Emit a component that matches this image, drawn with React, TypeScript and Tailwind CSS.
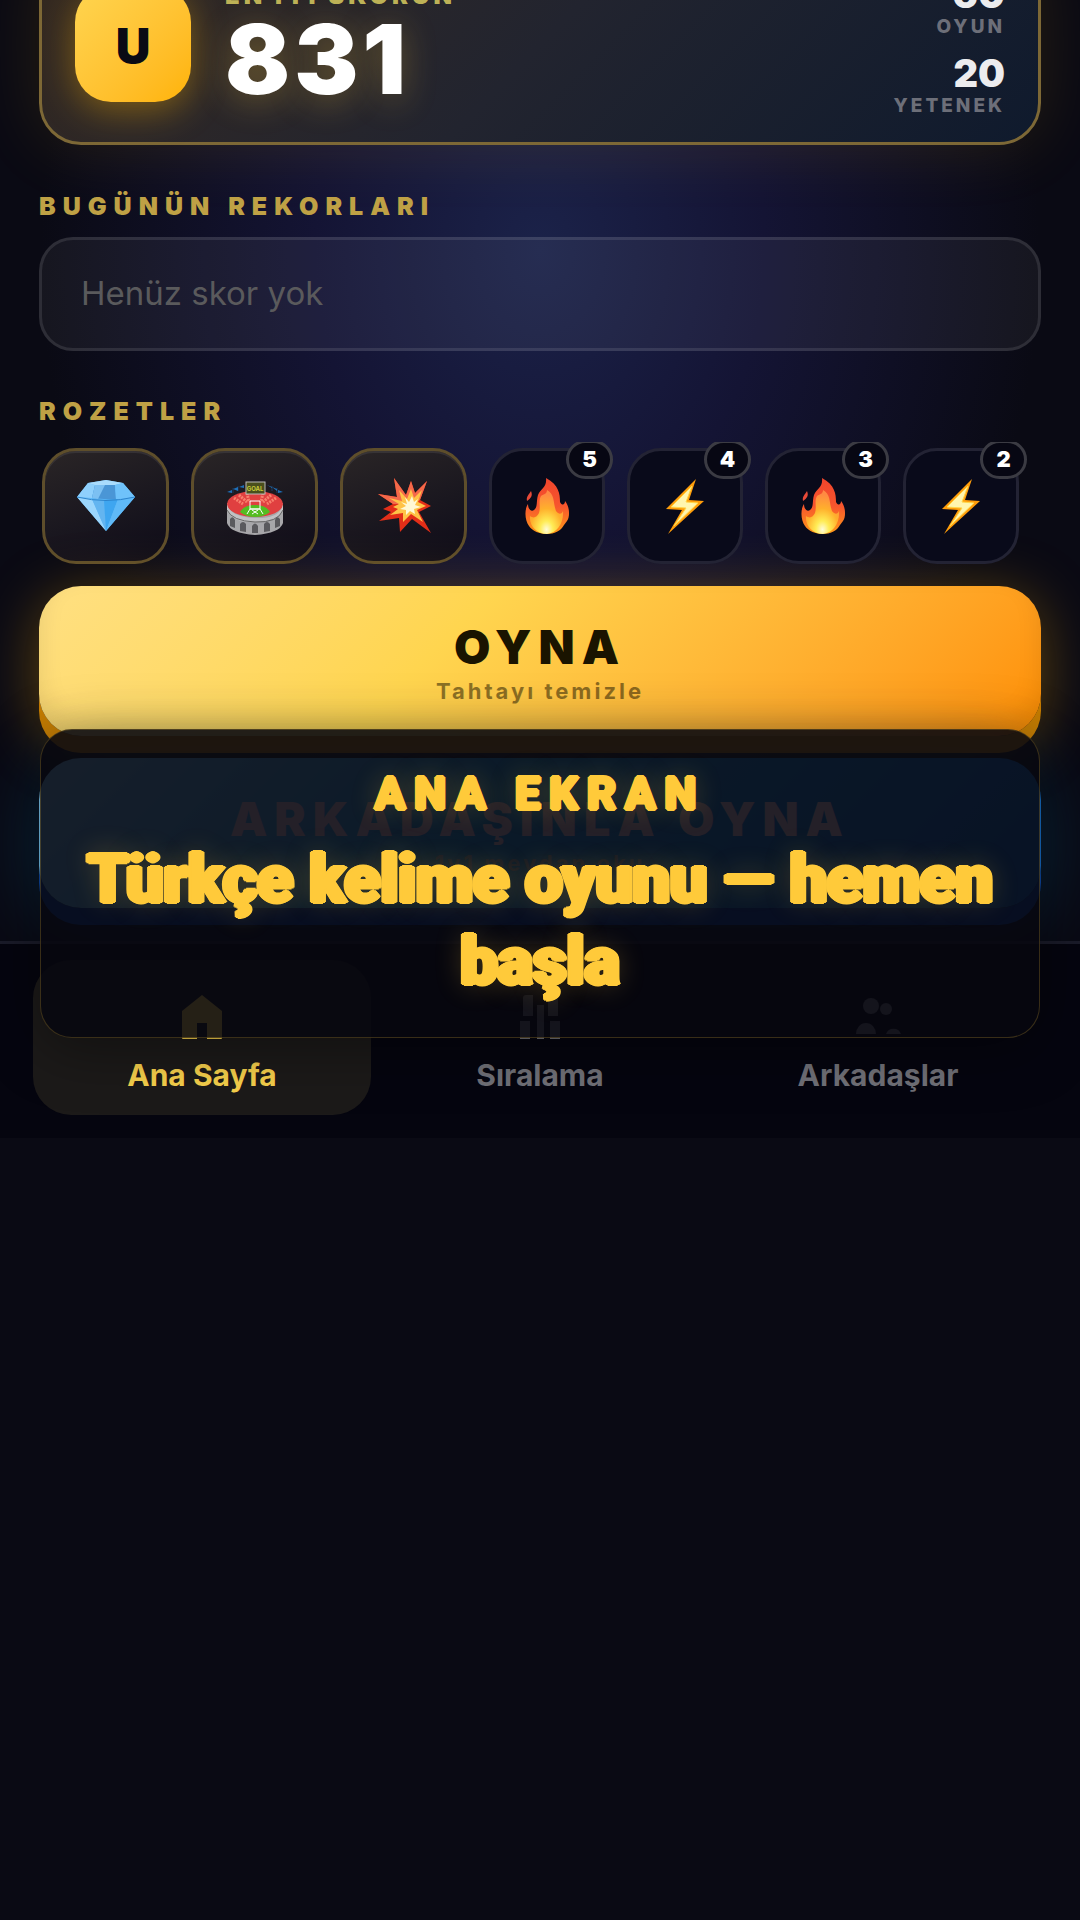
import React from 'react';

const Diamond = () => <svg viewBox="0 0 60 60" className="w-[60px] h-[60px]">
    <polygon points="1,21 12,7 30,4 47,7 59,21 30,55" fill="#5cb8f8" />
    <polygon points="1,21 12,7 19,9 16,22" fill="#8fd0fc" />
    <polygon points="12,7 30,4 47,7 39,9 19,9" fill="#a9dcfd" />
    <polygon points="19,9 39,9 40,24 16,22" fill="#4a96d6" />
    <polygon points="19,9 29,9 22,23 16,22" fill="#7cc0f2" />
    <polygon points="39,9 47,7 59,21 40,24" fill="#6fc2fa" />
    <polygon points="1,21 16,23 30,55" fill="#9bd6fc" />
    <polygon points="16,23 28,24 30,55" fill="#63b5f0" />
    <polygon points="28,24 42,23 30,55" fill="#3ea6f0" />
    <polygon points="42,23 59,21 30,55" fill="#5fbaf8" />
    <path d="M1 21Q30 28 59 21" fill="none" stroke="#2d84cc" strokeWidth="1" />
  </svg>;

const Stadium = () => <svg viewBox="0 0 60 60" className="w-[60px] h-[60px]">
    <path d="M8 17V12M13 15V10M47 15V10M52 17V12" stroke="#1d2a3f" strokeWidth="2" />
    <path d="M2 16l5-2v3zM8 13l5-2v4zM14 11l5-2v3zM42 9l5 2v1zM47 11l5 2v2zM53 14l5 2-5 1z" fill="#1e6fb8" />
    <path d="M2 27v20Q5 57 30 59Q55 57 58 47V27z" fill="#a7a7aa" />
    <ellipse cx="30" cy="28" rx="28" ry="13" fill="#e04040" />
    <path d="M9 22l9 6M14 19l8 7M22 17l2 9M38 17l-2 9M46 19l-8 7M51 22l-9 6" fill="none" stroke="#f8806c" strokeWidth="3" strokeDasharray="2 1" />
    <rect x="21" y="6" width="19" height="12" fill="#4b4f1c" stroke="#b9b9b9" strokeWidth="1" />
    <text x="30" y="15" textAnchor="middle" fontSize="6" fontWeight="700" fill="#c9cc3a" fontFamily="Inter, sans-serif">GOAL</text>
    <path d="M15 36Q19 29 30 29T45 36Q39 41 30 41T15 36z" fill="#53bd22" />
    <path d="M25 25h10v8H25zM22 38l3-5h10l3 5M27 34l6 4M33 34l-6 4" fill="none" stroke="#fff" strokeWidth="1" />
    <path d="M2 29Q6 41 30 42T58 29v5Q53 45 30 46T2 34z" fill="#c1c1c3" />
    <path d="M2 34Q7 45 30 46T58 34" fill="none" stroke="#666" strokeWidth="1" />
    <path d="M5 50v-7q3-4 5 1v8zM15 55v-7q3-4 6 0v8zM27 57v-7q3-5 6 0v7zM39 56v-8q3-4 6 0v7zM50 52v-8q2-5 5-1v7z" fill="#5a5a5e" />
  </svg>;

const Boom = () => <svg viewBox="0 0 60 60" className="w-[60px] h-[60px]">
    <polygon points="20,2 32,19 37,5 41,17 53,5 46,24 57,30 45,36 57,57 38,43 26,56 25,42 5,45 17,36 9,33 19,28 4,18 23,21" fill="#e32e18" />
    <polygon points="20,2 32,19 37,5 41,17 53,5 46,24 36,28 19,28 4,18 23,21" fill="#f4694a" />
    <polygon points="25,14 33,23 37,13 40,22 48,14 44,26 52,30 43,34 49,46 37,38 29,46 29,37 16,39 24,33 19,31 25,28 15,22 28,25" fill="#ffc347" />
    <polygon points="31,21 35,26 38,20 40,26 44,23 41,29 47,31 40,33 41,38 36,35 32,39 32,34 26,33 32,30 27,26 33,28" fill="#fff9d5" />
  </svg>;

const Fire = () => <svg viewBox="0 0 60 60" className="w-[60px] h-[60px]">
    <defs>
      <linearGradient id="flame" x1="0" y1="0" x2="0" y2="1">
        <stop offset="0" stopColor="#f0452c" />
        <stop offset="0.5" stopColor="#f7552d" />
        <stop offset="1" stopColor="#ff9a18" />
      </linearGradient>
      <radialGradient id="core" cx="0.5" cy="0.9" r="0.8">
        <stop offset="0" stopColor="#fffbd8" />
        <stop offset="0.25" stopColor="#ffec55" />
        <stop offset="0.6" stopColor="#ffb02c" />
        <stop offset="1" stopColor="#ff8a42" />
      </radialGradient>
    </defs>
    <path d="M29 2C42 9 43 18 43 26C45 30 48 29 48 25C53 31 53 41 50 45L47 49C44 55 37 58 30 58S15 55 12 50C8 45 7 34 11 28C11 33 14 36 17 34C21 31 19 26 21 19C24 12 30 12 29 2z" fill="url(#flame)" />
    <path d="M30 14C38 18 36 27 39 35C42 39 45 38 46 35C47 47 40 57 30 58C20 58 12 50 13 40C17 43 20 41 22 37C24 30 21 25 24 20C27 18 30 18 30 14z" fill="url(#core)" />
    <path d="M14 15C16 20 14 22 10 25C9 20 12 19 14 15z" fill="#e84a38" />
  </svg>;

const Bolt = () => <svg viewBox="0 0 60 60" className="w-[60px] h-[60px]">
    <polygon points="41,3 11,33 27,34 13,58 49,25 34,24" fill="#ff9d0a" />
    <polygon points="37,10 16,31 31,32 19,50 43,27 31,26" fill="#fff6b0" stroke="#ffd84a" strokeWidth="1" />
  </svg>;

const badges = [
  { name: 'Elmas', icon: Diamond, rare: true },
  { name: 'Stadyum', icon: Stadium, rare: true },
  { name: 'Patlama', icon: Boom, rare: true },
  { name: 'Ateş', icon: Fire, count: 5 },
  { name: 'Şimşek', icon: Bolt, count: 4 },
  { name: 'Ateş', icon: Fire, count: 3 },
  { name: 'Şimşek', icon: Bolt, count: 2 }
];

const HomeIcon = () => <svg viewBox="0 0 48 48" fill="currentColor" className="w-12 h-12">
    <path d="M24 2L44 18V45Q44 46 43 46H29V30H19V46H5Q4 46 4 45V18z" />
  </svg>;

const RankIcon = () => <svg viewBox="0 0 48 48" fill="currentColor" className="w-12 h-12">
    <path d="M10 2h7v21H7V5q0-3 3-3zM32 2h7q3 0 3 3v18H32zM4 28h10v18H4zM21 12h7v34h-7zM34 28h10v18H34z" />
  </svg>;

const FriendsIcon = () => <svg viewBox="0 0 48 48" fill="currentColor" className="w-12 h-12">
    <circle cx="17" cy="13" r="8" />
    <circle cx="32" cy="16" r="6" />
    <path d="M2 41a10 11 0 0 1 20 0zM32 41a8 8 0 0 1 15 0z" />
  </svg>;

const SectionTitle = ({ children }: { children: React.ReactNode }) => <h2 className="text-[25px] leading-[30px] font-black tracking-[7px] text-[#bfa145]">
    {children}
  </h2>;

const Stat = ({ value, label }: { value: number; label: string }) => <div className="text-right">
    <div className="text-[38px] leading-10 font-black text-[#ececee]">{value}</div>
    <div className="text-[19px] leading-[25px] font-extrabold tracking-[3px] text-[#6d6f79]">{label}</div>
  </div>;

export default function App() {
  return <div className="min-h-screen overflow-hidden bg-[#0a0a14] font-[Inter,sans-serif]">
      <div className="relative bg-[radial-gradient(ellipse_500px_640px_at_50%_250px,#1b2249_0%,#141434_45%,transparent_100%)]">
        <main className="px-[39px] pb-[33px] overflow-hidden">
          {/* Best score */}
          <section className="-mt-[57px] h-[202px] flex items-center rounded-[42px] border-3 border-[#7d6836] bg-linear-135 from-[#35291f] via-[#22242f] to-[#0f1a2d] px-[33px] shadow-[0_0_70px_rgba(255,193,7,0.12)]">
            <div className="size-[116px] shrink-0 rounded-[36px] flex items-center justify-center bg-linear-135 from-[#ffd54f] to-[#ffb300] pt-1 text-[48px] font-black text-[#0a0a14] shadow-[0_8px_36px_rgba(255,179,0,0.4)]">
              U
            </div>
            <div className="ml-[34px] flex-1">
              <div className="text-[24px] leading-[30px] font-black tracking-[4px] text-[#bdb257]">EN İYİ SKORUN</div>
              <div className="text-[96px] leading-[96px] font-black tracking-[4px] text-white [text-shadow:0_6px_34px_rgba(255,202,58,0.3)]">831</div>
            </div>
            <div className="flex flex-col gap-[14px] pt-1">
              <Stat value={60} label="OYUN" />
              <Stat value={20} label="YETENEK" />
            </div>
          </section>

          {/* Today's records */}
          <section className="mt-[46px]">
            <SectionTitle>BUGÜNÜN REKORLARI</SectionTitle>
            <div className="mt-4 h-[114px] flex items-center rounded-[34px] border-3 border-white/10 bg-white/5 px-[39px] text-[33px] text-[#5a5a5c]">
              Henüz skor yok
            </div>
          </section>

          {/* Badges */}
          <section className="mt-[45px]">
            <SectionTitle>ROZETLER</SectionTitle>
            <ul className="mt-4 flex gap-[22px] overflow-hidden pl-[3px] pt-[6px] pb-[22px]">
              {badges.map((badge, index) => <li key={index} aria-label={badge.name} className={badge.rare ? 'w-[127px] h-[116px] shrink-0 flex items-center justify-center rounded-[34px] border-3 border-[#5e4e2b] bg-linear-160 from-[#2a2526] to-[#0e0c19] shadow-[inset_0_2px_0_rgba(255,255,255,0.08)]' : 'relative w-[116px] h-[116px] shrink-0 flex items-center justify-center rounded-[34px] border-3 border-[#232334] bg-[#090a1a]'}>
                  <badge.icon />
                  {badge.count && <span className="absolute -top-[11px] -right-[11px] w-[47px] h-[39px] flex items-center justify-center rounded-full border-3 border-[#3b3b43] bg-[#070713] text-[22px] font-black text-white">
                      {badge.count}
                    </span>}
                </li>)}
            </ul>
          </section>

          {/* Play buttons */}
          <div className="flex flex-col gap-[22px]">
            <button className="h-[150px] flex flex-col items-center justify-center rounded-[42px] bg-linear-135 from-[#ffe082] via-[#ffd54f] via-40% to-[#ff8f00] pt-2 text-[#1a1400] shadow-[inset_0_-14px_24px_rgba(0,0,0,0.1),0_17px_0_#c67c00,0_10px_60px_rgba(255,179,0,0.35)]">
              <span className="text-[47px] leading-[52px] font-black tracking-[7px]">OYNA</span>
              <span className="text-[22px] leading-9 font-bold tracking-[3px] opacity-50">Tahtayı temizle</span>
            </button>
            <button className="h-[150px] flex flex-col items-center justify-center rounded-[42px] bg-linear-135 from-[#81c8ee] via-[#29a4e0] via-40% to-[#1565c0] pt-2 text-[#f0d0d8] shadow-[0_17px_0_#0d47a1,0_10px_80px_rgba(3,169,244,0.22)]">
              <span className="text-[47px] leading-[52px] font-black tracking-[7px]">ARKADAŞINLA OYNA</span>
              <span className="text-[22px] leading-9 font-bold tracking-[3px] text-[#8aa0b0]">1v1 meydan oku</span>
            </button>
          </div>
        </main>

        <nav className="relative grid grid-cols-3 border-t-3 border-[#1a1b29] bg-[#05050f] px-[33px] pt-4 pb-[23px] text-[30px] leading-10 font-bold text-[#717178]">
          <a href="#home" className="flex flex-col items-center gap-[14px] rounded-[38px] bg-[#1c1a19] pt-[33px] pb-5 text-[#f8d14c]">
            <HomeIcon />
            Ana Sayfa
          </a>
          <a href="#ranking" className="flex flex-col items-center gap-[14px] pt-[33px] pb-5">
            <RankIcon />
            Sıralama
          </a>
          <a href="#friends" className="flex flex-col items-center gap-[14px] pt-[33px] pb-5">
            <FriendsIcon />
            Arkadaşlar
          </a>
        </nav>

        {/* Caption card floating over the screen */}
        <div className="absolute inset-x-10 bottom-[100px] rounded-[32px] border border-[#ffca3a]/20 bg-[#07070f]/88 px-8 pt-[39px] pb-[34px] text-center font-[Roboto,sans-serif] text-[#ffca3a] shadow-[0_10px_60px_rgba(0,0,0,0.4)]">
          <p className="text-[45px] leading-[50px] font-extrabold tracking-[9px] [text-shadow:2px_0_#ffca3a,-2px_0_#ffca3a,0_2px_#ffca3a,0_-2px_#ffca3a,1px_1px_#ffca3a,-1px_1px_#ffca3a,1px_-1px_#ffca3a,-1px_-1px_#ffca3a,0_0_28px_rgba(255,202,58,0.3)]">ANA EKRAN</p>
          <p className="mt-5 text-[66px] leading-[82px] font-extrabold [text-shadow:3px_0_#ffca3a,-3px_0_#ffca3a,0_2px_#ffca3a,0_-2px_#ffca3a,2px_1px_#ffca3a,-2px_1px_#ffca3a,2px_-1px_#ffca3a,-2px_-1px_#ffca3a,0_0_28px_rgba(255,202,58,0.3)]">
            Türkçe kelime oyunu — hemen başla
          </p>
        </div>
      </div>
    </div>;
}
